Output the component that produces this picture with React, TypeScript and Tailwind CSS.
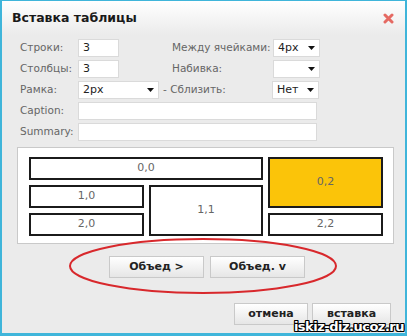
import React from "react";

const Caret = () => (
  <svg width="7" height="4" viewBox="0 0 7 4" className="shrink-0">
    <path d="M0 0h7L3.5 4z" fill="#111" />
  </svg>
);

const Field = ({ value, className }: { value?: string; className: string }) => (
  <div
    className={`flex h-[18px] items-center border border-[#dadada] bg-white pl-[4px] text-[11px] text-[#222] ${className}`}
  >
    {value}
  </div>
);

const Select = ({ value, className }: { value: string; className: string }) => (
  <div
    className={`flex h-[18px] items-center justify-between border border-[#dadada] bg-white pl-[4px] pr-[4px] text-[11px] text-[#222] ${className}`}
  >
    <span>{value}</span>
    <Caret />
  </div>
);

const Cell = ({ label, className = "" }: { label: string; className?: string }) => (
  <div
    className={`flex items-center justify-center border-2 border-[#1b1b1b] text-[11px] text-[#666] ${className}`}
  >
    {label}
  </div>
);

const Btn = ({ label, className }: { label: string; className: string }) => (
  <button
    className={`h-[22px] border border-[#c9c9c9] bg-gradient-to-b from-white to-[#e6e6e6] text-[11px] font-bold text-[#222] ${className}`}
  >
    {label}
  </button>
);

export default function App() {
  return (
    <div className="relative h-[336px] w-[407px] overflow-hidden border-x-2 border-t border-b-[3px] border-[#3fb5da] bg-[#ebebeb] font-['DejaVu_Sans',sans-serif]">
      {/* Title */}
      <div className="flex h-[34px] items-center justify-between bg-gradient-to-b from-white to-[#ebebeb] pl-[10px] pr-[11px]">
        <span className="text-[12.5px] font-bold text-[#1a1a1a]">Вставка таблицы</span>
        <svg width="11" height="11" viewBox="0 0 11 11">
          <path d="M2 2l7 7M9 2l-7 7" stroke="#e56a63" strokeWidth="3" strokeLinecap="round" />
        </svg>
      </div>

      {/* Form */}
      <div className="mt-[4px] flex flex-col gap-[3px] pl-[18px] text-[10.5px] text-[#666]">
        <div className="flex items-center">
          <span className="w-[58px]">Строки:</span>
          <Field value="3" className="w-[41px]" />
          <span className="ml-[53px] w-[101px]">Между ячейками:</span>
          <Select value="4px" className="w-[47px]" />
        </div>
        <div className="flex items-center">
          <span className="w-[58px]">Столбцы:</span>
          <Field value="3" className="w-[41px]" />
          <span className="ml-[53px] w-[101px]">Набивка:</span>
          <Select value="" className="w-[47px]" />
        </div>
        <div className="flex items-center">
          <span className="w-[58px]">Рамка:</span>
          <Select value="2px" className="w-[81px]" />
          <span className="ml-[4px] w-[109px]">- Сблизить:</span>
          <Select value="Нет" className="w-[47px]" />
        </div>
        <div className="flex items-center">
          <span className="w-[58px]">Caption:</span>
          <Field className="w-[239px]" />
        </div>
        <div className="flex items-center">
          <span className="w-[58px]">Summary:</span>
          <Field className="w-[239px]" />
        </div>
      </div>

      {/* Table preview */}
      <div className="ml-[15px] mt-[6px] w-[377px] border border-[#c9c9c9] bg-white px-[11px] pb-[7px] pt-[9px]">
        <div className="grid grid-cols-[115px_114px_115px] grid-rows-[23px_23px_23px] gap-x-[5px] gap-y-[5px]">
          <Cell label="0,0" className="col-span-2" />
          <Cell label="0,2" className="row-span-2 bg-[#fbc409] text-[#7d6516]" />
          <Cell label="1,0" />
          <Cell label="1,1" className="row-span-2" />
          <Cell label="2,0" />
          <Cell label="2,2" />
        </div>
      </div>

      {/* Merge buttons */}
      <div className="mt-[12px] flex gap-[6px] pl-[107px]">
        <Btn label="Объед >" className="w-[95px]" />
        <Btn label="Объед. v" className="w-[95px]" />
      </div>

      {/* Highlight */}
      <svg className="pointer-events-none absolute left-0 top-0" width="407" height="336">
        <ellipse cx="201" cy="265" rx="133" ry="27" fill="none" stroke="#d8282c" strokeWidth="2" />
      </svg>

      {/* Dialog buttons */}
      <div className="mt-[25px] flex justify-end gap-[4px] pr-[14px]">
        <Btn label="отмена" className="w-[74px]" />
        <Btn label="вставка" className="w-[79px]" />
      </div>

      {/* Watermark */}
      <span className="absolute bottom-[1px] right-[1px] text-[13px] leading-[11px] font-bold tracking-[-0.5px] text-white [text-shadow:1px_0_0_#000,-1px_0_0_#000,0_1px_0_#000,0_-1px_0_#000,1px_1px_0_#000,-1px_-1px_0_#000,1px_-1px_0_#000,-1px_1px_0_#000]">
        iskiz-diz.ucoz.ru
      </span>
    </div>
  );
}
